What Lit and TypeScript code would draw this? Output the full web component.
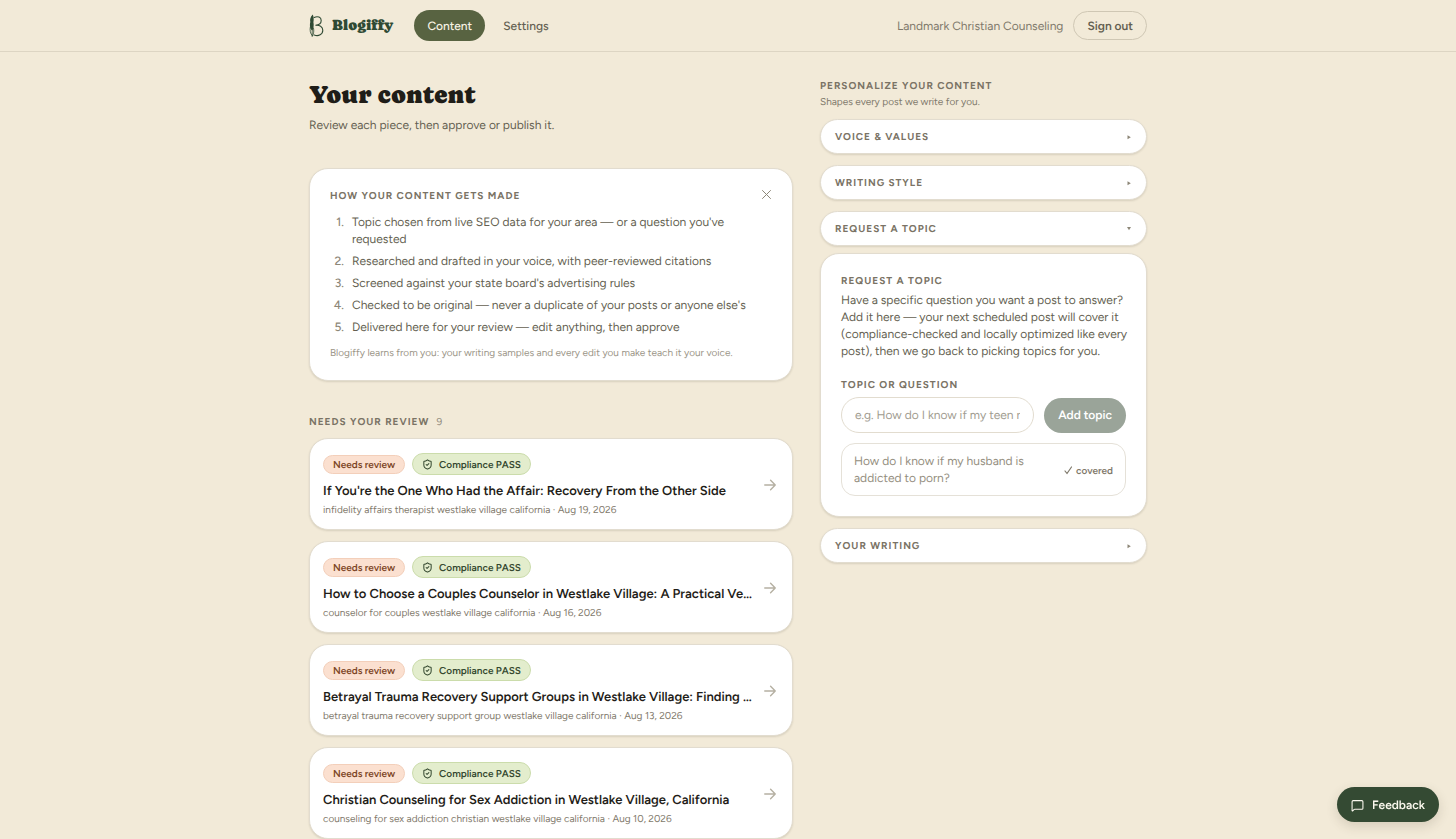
import { LitElement, html, css, svg } from "lit";
import { customElement, property, state } from "lit/decorators.js";

interface Post {
  title: string;
  keyword: string;
  date: string;
}

const POSTS: Post[] = [
  {
    title: "If You're the One Who Had the Affair: Recovery From the Other Side",
    keyword: "infidelity affairs therapist westlake village california",
    date: "Aug 19, 2026",
  },
  {
    title: "How to Choose a Couples Counselor in Westlake Village: A Practical Ve…",
    keyword: "counselor for couples westlake village california",
    date: "Aug 16, 2026",
  },
  {
    title: "Betrayal Trauma Recovery Support Groups in Westlake Village: Finding …",
    keyword: "betrayal trauma recovery support group westlake village california",
    date: "Aug 13, 2026",
  },
  {
    title: "Christian Counseling for Sex Addiction in Westlake Village, California",
    keyword: "counseling for sex addiction christian westlake village california",
    date: "Aug 10, 2026",
  },
];

const STEPS = [
  "Topic chosen from live SEO data for your area — or a question you've requested",
  "Researched and drafted in your voice, with peer-reviewed citations",
  "Screened against your state board's advertising rules",
  "Checked to be original — never a duplicate of your posts or anyone else's",
  "Delivered here for your review — edit anything, then approve",
];

const base = css`
  * {
    box-sizing: border-box;
  }
  h1,
  h2,
  h3,
  p,
  ol,
  ul {
    margin: 0;
    padding: 0;
  }
  ol,
  ul {
    list-style: none;
  }
  button,
  input {
    font: inherit;
    color: inherit;
    margin: 0;
    text-rendering: inherit;
  }
  button {
    cursor: pointer;
  }
  a {
    color: inherit;
    text-decoration: none;
  }
  svg {
    display: block;
    flex: none;
  }
  .eyebrow {
    font-size: 10px;
    line-height: 13px;
    font-weight: 700;
    letter-spacing: 1px;
    text-transform: uppercase;
    color: #7a7365;
  }
  .surface {
    background: #fff;
    border: 1px solid #e2dccf;
    box-shadow: 0 1px 2px rgba(60, 50, 30, 0.14);
  }
`;

@customElement("post-card")
class PostCard extends LitElement {
  @property({ attribute: false }) post!: Post;

  static styles = [
    base,
    css`
      :host {
        display: block;
      }
      .card {
        display: flex;
        align-items: center;
        gap: 8px;
        padding: 14px 15px 12px 13px;
        border-radius: 19px;
      }
      .body {
        flex: 1;
        min-width: 0;
      }
      .badges {
        display: flex;
        align-items: center;
        gap: 7px;
        margin-bottom: 7px;
        font-size: 10px;
        font-weight: 600;
      }
      .badge {
        display: flex;
        align-items: center;
        gap: 6px;
        padding: 0 9px;
        border: 1px solid;
        border-radius: 11px;
      }
      .review {
        height: 19px;
        background: #fbe0d0;
        border-color: #f3cfba;
        color: #7d4526;
      }
      .pass {
        height: 22px;
        background: #e3edcd;
        border-color: #cbdcab;
        color: #34482f;
      }
      .title {
        font-size: 13px;
        line-height: 20px;
        font-weight: 600;
        color: #1f1d18;
        white-space: nowrap;
        overflow: hidden;
        text-overflow: ellipsis;
      }
      .meta {
        font-size: 10px;
        line-height: 15px;
        color: #7f796b;
      }
    `,
  ];

  render() {
    return html`
      <a class="card surface" href="#">
        <div class="body">
          <div class="badges">
            <span class="badge review">Needs review</span>
            <span class="badge pass">
              <svg width="11" height="11" viewBox="0 0 24 24" fill="none" stroke="currentColor" stroke-width="2.2" stroke-linecap="round" stroke-linejoin="round" aria-hidden="true">
                <path d="M20 13c0 5-3.500 7.500-7.660 8.950a1 1 0 0 1-.67-.01C7.500 20.500 4 18 4 13V6a1 1 0 0 1 1-1c2 0 4.500-1.200 6.240-2.720a1.170 1.170 0 0 1 1.520 0C14.510 3.810 17 5 19 5a1 1 0 0 1 1 1z" />
                <path d="m9 12 2 2 4-4" />
              </svg>
              Compliance PASS
            </span>
          </div>
          <h3 class="title">${this.post.title}</h3>
          <p class="meta">${this.post.keyword} · ${this.post.date}</p>
        </div>
        <svg width="14" height="14" viewBox="0 0 24 24" fill="none" stroke="#b5b0a2" stroke-width="2.4" stroke-linecap="round" stroke-linejoin="round" aria-hidden="true">
          <path d="M3 12h18M13 4l8 8-8 8" />
        </svg>
      </a>
    `;
  }
}

@customElement("app-root")
class AppRoot extends LitElement {
  @state() private open = "Request a topic";
  @state() private showGuide = true;

  static styles = [
    base,
    css`
      :host {
        display: block;
        min-height: 100vh;
        background: #f2ead8;
        color: #645f51;
        font-family: Figtree, Inter, sans-serif;
        font-size: 12px;
        line-height: 17px;
        text-rendering: geometricPrecision;
      }
      .topbar {
        border-bottom: 1px solid #ddd5c3;
      }
      .bar,
      .page {
        max-width: 880px;
        margin: 0 auto;
        padding: 0 21px;
      }
      .bar {
        display: flex;
        align-items: center;
        height: 51px;
      }
      .brand {
        display: flex;
        align-items: center;
        gap: 8px;
        margin-right: 21px;
        font-family: Caprasimo, Fraunces, "DejaVu Serif", serif;
        font-size: 15px;
        font-weight: 400;
        color: #2f4a34;
      }
      .nav {
        display: flex;
        flex: 1;
        gap: 5px;
        font-weight: 500;
      }
      .nav a {
        padding: 8px 13px 6px;
        border-radius: 16px;
      }
      .nav .current {
        background: #586341;
        color: #f7f2e4;
      }
      .account {
        margin-right: 10px;
        padding-top: 1px;
        color: #7f796b;
      }
      .signout {
        height: 29px;
        padding: 1px 13px 0;
        border: 1px solid #cfc7b4;
        border-radius: 15px;
        background: none;
        font-weight: 600;
      }
      .page {
        display: grid;
        grid-template-columns: minmax(0, 1fr) 327px;
        gap: 27px;
        align-items: start;
        padding-top: 27px;
      }
      .headline {
        font-family: Caprasimo, Fraunces, "DejaVu Serif", serif;
        font-size: 25px;
        line-height: 32px;
        font-weight: 400;
        color: #1f1d18;
      }
      .lede {
        margin-top: 6px;
        margin-bottom: 34px;
      }
      .guide {
        padding: 20px;
        border-radius: 19px;
        margin-bottom: 34px;
      }
      .guidehead {
        display: flex;
        justify-content: space-between;
        height: 13px;
        margin-bottom: 12px;
      }
      .close {
        display: flex;
        align-items: center;
        justify-content: center;
        width: 11px;
        height: 11px;
        padding: 0;
        border: 0;
        background: none;
        color: #8d8778;
      }
      .steps {
        display: grid;
        gap: 5px;
      }
      .steps li {
        display: grid;
        grid-template-columns: 14px 1fr;
        gap: 8px;
      }
      .num {
        text-align: right;
        font-weight: 500;
        color: #8d8778;
      }
      .note {
        margin-top: 9px;
        font-size: 10px;
        line-height: 15px;
        color: #9b9587;
      }
      .listhead {
        display: flex;
        gap: 7px;
        margin-bottom: 10px;
      }
      .count {
        font-weight: 400;
        color: #8d8778;
      }
      .posts {
        display: grid;
        grid-template-columns: minmax(0, 1fr);
        gap: 11px;
      }
      .hint {
        padding-top: 1px;
        margin-bottom: 9px;
        font-size: 10px;
        line-height: 17px;
        color: #7f796b;
      }
      .groups {
        display: grid;
        gap: 11px;
      }
      .toggle {
        display: flex;
        align-items: center;
        justify-content: space-between;
        width: 100%;
        height: 35px;
        padding: 0 14px;
        border-radius: 18px;
      }
      .panel {
        margin-top: 7px;
        padding: 20px;
        border-radius: 19px;
      }
      .copy {
        margin: 5px -4px 18px 0;
      }
      .label {
        display: block;
        margin-bottom: 6px;
      }
      .entry {
        display: flex;
        align-items: flex-end;
        gap: 10px;
        margin-bottom: 10px;
      }
      .field {
        flex: 1;
        min-width: 0;
        height: 36px;
        padding: 0 13px;
        border: 1px solid #e2dccf;
        border-radius: 18px;
        background: #fff;
      }
      .field::placeholder {
        color: #a19c90;
        opacity: 1;
      }
      .add {
        height: 35px;
        padding: 0 14px;
        border: 0;
        border-radius: 18px;
        background: #9aa499;
        color: #fff;
        font-weight: 600;
      }
      .asked {
        display: flex;
        align-items: center;
        gap: 24px;
        padding: 9px 12px 8px;
        border: 1px solid #e5e1d8;
        border-radius: 14px;
        color: #948e80;
      }
      .asked p {
        flex: 1;
      }
      .covered {
        display: flex;
        align-items: center;
        gap: 3px;
        font-size: 10px;
        font-weight: 600;
        color: #7f796b;
      }
      .feedback {
        position: fixed;
        right: 17px;
        bottom: 17px;
        display: flex;
        align-items: center;
        gap: 8px;
        height: 35px;
        padding: 1px 14px 0;
        border: 0;
        border-radius: 18px;
        background: #344a33;
        color: #fbf8ee;
        font-weight: 600;
        box-shadow: 0 4px 12px rgba(60, 50, 30, 0.16);
      }
    `,
  ];

  private toggle(name: string) {
    this.open = this.open === name ? "" : name;
  }

  private group(name: string, body: unknown = "") {
    const expanded = this.open === name;
    return html`
      <section>
        <button class="toggle surface eyebrow" aria-expanded=${expanded} @click=${() => this.toggle(name)}>
          ${name}
          <svg width="6" height="6" viewBox="0 0 6 6" fill="#8d8778" aria-hidden="true">
            ${expanded ? svg`<path d="M1 1h4L3 4.300z" />` : svg`<path d="M1.500 1.200v4L4.800 3.200z" />`}
          </svg>
        </button>
        ${expanded ? body : ""}
      </section>
    `;
  }

  private topicPanel() {
    return html`
      <div class="panel surface">
        <h3 class="eyebrow">Request a topic</h3>
        <p class="copy">
          Have a specific question you want a post to answer? Add it here — your next scheduled post will cover it
          (compliance-checked and locally optimized like every post), then we go back to picking topics for you.
        </p>
        <label class="label eyebrow" for="topic">Topic or question</label>
        <div class="entry">
          <input class="field" id="topic" type="text" placeholder="e.g. How do I know if my teen needs counseling?" />
          <button class="add" disabled>Add topic</button>
        </div>
        <div class="asked">
          <p>How do I know if my husband is addicted to porn?</p>
          <span class="covered">
            <svg width="9" height="9" viewBox="0 0 9 9" fill="none" stroke="currentColor" stroke-width="1.200" stroke-linecap="round" stroke-linejoin="round" aria-hidden="true">
              <path d="M1 5 3 7.500 7.500 1" />
            </svg>
            covered
          </span>
        </div>
      </div>
    `;
  }

  render() {
    return html`
      <header class="topbar">
        <div class="bar">
          <a class="brand" href="#">
            <svg width="15" height="24" viewBox="0 0 15 24" fill="none" stroke="#2f4a34" stroke-linecap="round" aria-hidden="true">
              <path d="M3.800.500C1.400 2.800.7 5.500 1.300 8 .6 10.500.8 13 2 15.500l1.500 1c1.200-2.800 1.500-5.500.9-8.200C5 5.500 4.700 2.800 3.800.500z" fill="#2f4a34" stroke="none" />
              <path d="M1.300 13c-.6 3.500 0 6.500 2.200 9 1.300-2.500 1.600-5 1-8M3.200 12v10.500" stroke-width=".8" />
              <path d="M5.200 3.400C8.700 1.800 12.200 3.200 12.200 6.500c0 2.800-2.700 4.500-5.700 4.900 4-.5 7.300 1.300 7.300 4.900 0 4-4.200 6.400-8.600 4.700" stroke-width="1.100" />
            </svg>
            Blogiffy
          </a>
          <nav class="nav">
            <a class="current" href="#" aria-current="page">Content</a>
            <a href="#">Settings</a>
          </nav>
          <span class="account">Landmark Christian Counseling</span>
          <button class="signout">Sign out</button>
        </div>
      </header>
      <main class="page">
        <div>
          <h1 class="headline">Your content</h1>
          <p class="lede">Review each piece, then approve or publish it.</p>
          ${this.showGuide
            ? html`
                <section class="guide surface">
                  <div class="guidehead">
                    <h2 class="eyebrow">How your content gets made</h2>
                    <button class="close" aria-label="Dismiss" @click=${() => (this.showGuide = false)}>
                      <svg width="9" height="9" viewBox="0 0 9 9" fill="none" stroke="currentColor" stroke-linecap="round" aria-hidden="true">
                        <path d="m.5.500 8 8M8.500.500l-8 8" />
                      </svg>
                    </button>
                  </div>
                  <ol class="steps">
                    ${STEPS.map((step, i) => html`<li><span class="num">${i + 1}.</span><span>${step}</span></li>`)}
                  </ol>
                  <p class="note">Blogiffy learns from you: your writing samples and every edit you make teach it your voice.</p>
                </section>
              `
            : ""}
          <section>
            <div class="listhead eyebrow">
              <h2 class="eyebrow">Needs your review</h2>
              <span class="count">9</span>
            </div>
            <div class="posts">${POSTS.map((post) => html`<post-card .post=${post}></post-card>`)}</div>
          </section>
        </div>
        <aside>
          <h2 class="eyebrow">Personalize your content</h2>
          <p class="hint">Shapes every post we write for you.</p>
          <div class="groups">
            ${this.group("Voice & values")} ${this.group("Writing style")}
            ${this.group("Request a topic", this.topicPanel())} ${this.group("Your writing")}
          </div>
        </aside>
      </main>
      <button class="feedback">
        <svg width="13" height="13" viewBox="0 0 24 24" fill="none" stroke="currentColor" stroke-width="2" stroke-linecap="round" stroke-linejoin="round" aria-hidden="true">
          <path d="M22 17a2 2 0 0 1-2 2H6.800a2 2 0 0 0-1.400.6l-2.200 2.200A.7.7 0 0 1 2 21.300V5a2 2 0 0 1 2-2h16a2 2 0 0 1 2 2z" />
        </svg>
        Feedback
      </button>
    `;
  }
}
